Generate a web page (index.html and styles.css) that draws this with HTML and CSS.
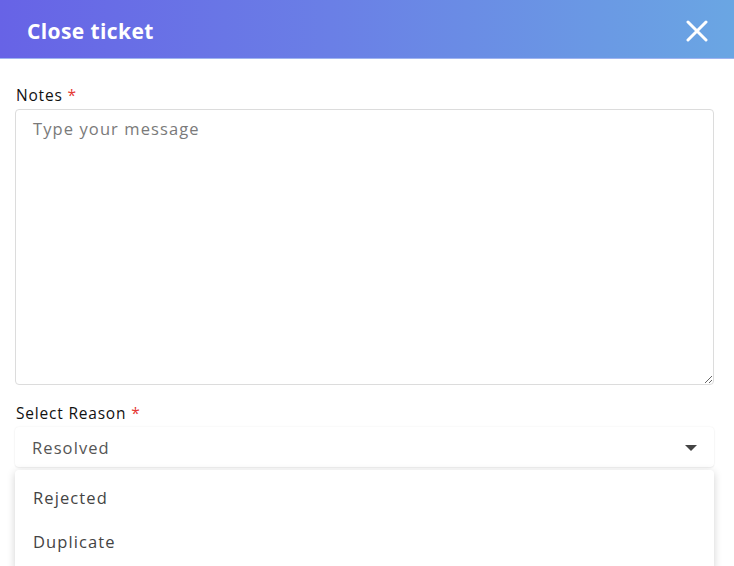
FILE: index.html
```html
<!DOCTYPE html>
<html>
<head>
<meta charset="utf-8">
<link rel="stylesheet" href="styles.css">
</head>
<body>
<div class="modal">
  <header class="head">
    <h1 class="title">Close ticket</h1>
    <button class="close" aria-label="Close">
      <svg width="22" height="22" viewBox="0 0 22 22"><path d="M2 2 L20 20 M20 2 L2 20" stroke="#fff" stroke-width="3" stroke-linecap="round" fill="none"/></svg>
    </button>
  </header>
  <div class="content">
    <label class="label">Notes <span class="req">*</span></label>
    <textarea class="notes" placeholder="Type your message"></textarea>
    <label class="label label-reason">Select Reason <span class="req">*</span></label>
    <div class="select">
      <span class="value">Resolved</span>
      <span class="caret"></span>
    </div>
    <ul class="menu">
      <li class="item">Rejected</li>
      <li class="item">Duplicate</li>
    </ul>
  </div>
</div>
</body>
</html>
```
FILE: styles.css
```css
* { box-sizing: border-box; }
html, body { margin: 0; padding: 0; background: #fff; }
body {
  font-family: "Open Sans", "Noto Sans", sans-serif;
  width: 734px;
  height: 566px;
  overflow: hidden;
}
.head {
  height: 59px;
  background: linear-gradient(90deg, #6763e6 0%, #6a7fe6 45%, #6aa6e3 100%);
  border-bottom: 1px solid #9fb4f0;
  display: flex;
  align-items: center;
  justify-content: space-between;
  padding: 3px 26px 0 27px;
}
.title {
  margin: 0;
  color: #fff;
  font-size: 21px;
  font-weight: 700;
  letter-spacing: 0.4px;
}
.close {
  background: none;
  border: 0;
  padding: 0;
  width: 22px;
  height: 22px;
  display: flex;
}
.content {
  padding: 25px 20px 0 15px;
  display: flex;
  flex-direction: column;
}
.label {
  font-size: 15.5px;
  color: #111;
  line-height: 22px;
  padding-left: 1px;
  margin-bottom: 3px;
  letter-spacing: 0.8px;
}
.req { color: #e53935; letter-spacing: 0; }
.notes {
  display: block;
  width: 100%;
  height: 276px;
  border: 1px solid #dcdcdc;
  border-radius: 4px;
  padding: 7px 17px;
  font-family: inherit;
  font-size: 16.5px;
  letter-spacing: 1.1px;
  color: #333;
  resize: vertical;
  margin: 0;
}
.notes::placeholder { color: #7a7a7a; }
.label-reason { margin-top: 17px; margin-bottom: 3px; }
.select {
  height: 40px;
  border-radius: 4px;
  background: #fff;
  box-shadow: 0 0 2px rgba(0,0,0,0.08), 0 1px 2px rgba(0,0,0,0.06);
  display: flex;
  align-items: center;
  justify-content: space-between;
  padding: 0 17px 0 17px;
}
.value { font-size: 16.5px; color: #555; letter-spacing: 1.1px; }
.caret {
  width: 0; height: 0;
  border-left: 6px solid transparent;
  border-right: 6px solid transparent;
  border-top: 6px solid #444;
  margin-top: 2px;
}
.menu {
  list-style: none;
  margin: 3px 0 0 0;
  padding: 6px 0;
  border-radius: 4px;
  background: #fff;
  box-shadow: 0 2px 8px rgba(0,0,0,0.18);
}
.item {
  height: 44px;
  line-height: 44px;
  padding: 0 18px;
  font-size: 16.5px;
  letter-spacing: 1.1px;
  color: #444;
}
```
